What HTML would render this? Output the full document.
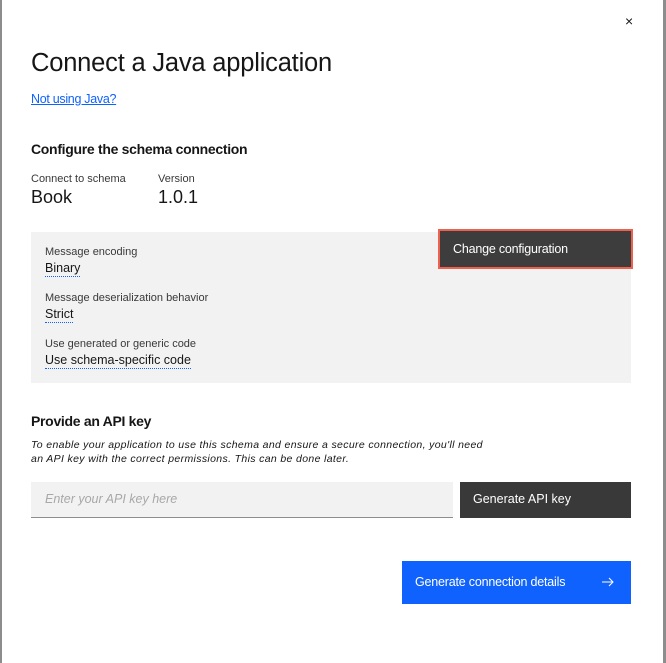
<!DOCTYPE html>
<html><head><meta charset="utf-8"><style>
*{margin:0;padding:0;box-sizing:border-box}
body{width:666px;height:663px;background:#fff;font-family:"Liberation Sans",sans-serif;color:#161616;position:relative;overflow:hidden}
.a{position:absolute;white-space:nowrap}
.lb{left:0;top:0;width:2px;height:663px;background:#8d8d8d}
.rb{right:0;top:0;width:3px;height:663px;background:#8d8d8d}
.u{border-bottom:1px dotted #0f62fe;padding-bottom:1px}
</style></head><body>
<div class="a lb"></div><div class="a rb"></div>
<div class="a" style="left:625px;top:13px;font-size:14px;color:#161616">×</div>
<div class="a" style="left:31px;top:49px;font-size:25.5px;letter-spacing:-0.2px;font-weight:300">Connect a Java application</div>
<div class="a" style="left:31px;top:92px;font-size:12.5px;color:#0f62fe;text-decoration:underline;letter-spacing:-0.3px">Not using Java?</div>
<div class="a" style="left:31px;top:141px;font-size:14px;font-weight:bold;letter-spacing:-0.3px">Configure the schema connection</div>
<div class="a" style="left:31px;top:173px;font-size:11px;color:#393939">Connect to schema</div>
<div class="a" style="left:158px;top:173px;font-size:11px;color:#393939">Version</div>
<div class="a" style="left:31px;top:187px;font-size:18px">Book</div>
<div class="a" style="left:158px;top:187px;font-size:18px">1.0.1</div>
<div class="a" style="left:31px;top:232px;width:600px;height:151px;background:#f2f2f2"></div>
<div class="a" style="left:45px;top:246px;font-size:11px;color:#393939">Message encoding</div>
<div class="a" style="left:45px;top:261px;font-size:12.5px"><span class="u">Binary</span></div>
<div class="a" style="left:45px;top:292px;font-size:11px;color:#393939">Message deserialization behavior</div>
<div class="a" style="left:45px;top:307px;font-size:12.5px"><span class="u">Strict</span></div>
<div class="a" style="left:45px;top:338px;font-size:11px;color:#393939">Use generated or generic code</div>
<div class="a" style="left:45px;top:353px;font-size:12.5px"><span class="u">Use schema-specific code</span></div>
<div class="a" style="left:438px;top:229px;width:195px;height:40px;border:2px solid #f0604d;background:#3d3d3d"></div>
<div class="a" style="left:453px;top:242px;font-size:12.5px;color:#fff;letter-spacing:-0.2px">Change configuration</div>
<div class="a" style="left:31px;top:413px;font-size:14px;font-weight:bold;letter-spacing:-0.3px">Provide an API key</div>
<div class="a" style="left:31px;top:438px;font-size:10.5px;font-style:italic;line-height:14px;color:#161616;letter-spacing:0.35px">To enable your application to use this schema and ensure a secure connection, you'll need<br>an API key with the correct permissions. This can be done later.</div>
<div class="a" style="left:31px;top:482px;width:422px;height:36px;background:#f2f2f2;border-bottom:1px solid #8d8d8d"></div>
<div class="a" style="left:45px;top:492px;font-size:12.5px;font-style:italic;color:#a8a8a8">Enter your API key here</div>
<div class="a" style="left:460px;top:482px;width:171px;height:36px;background:#393939"></div>
<div class="a" style="left:473px;top:492px;font-size:12.5px;color:#fff">Generate API key</div>
<div class="a" style="left:402px;top:561px;width:229px;height:43px;background:#0f62fe"></div>
<div class="a" style="left:415px;top:575px;font-size:12.5px;color:#fff;letter-spacing:-0.2px">Generate connection details</div>
<svg class="a" style="left:601px;top:575px" width="14" height="14" viewBox="0 0 14 14"><path d="M1 7h11M8 3l4 4-4 4" stroke="#fff" stroke-width="1" fill="none"/></svg>
</body></html>
